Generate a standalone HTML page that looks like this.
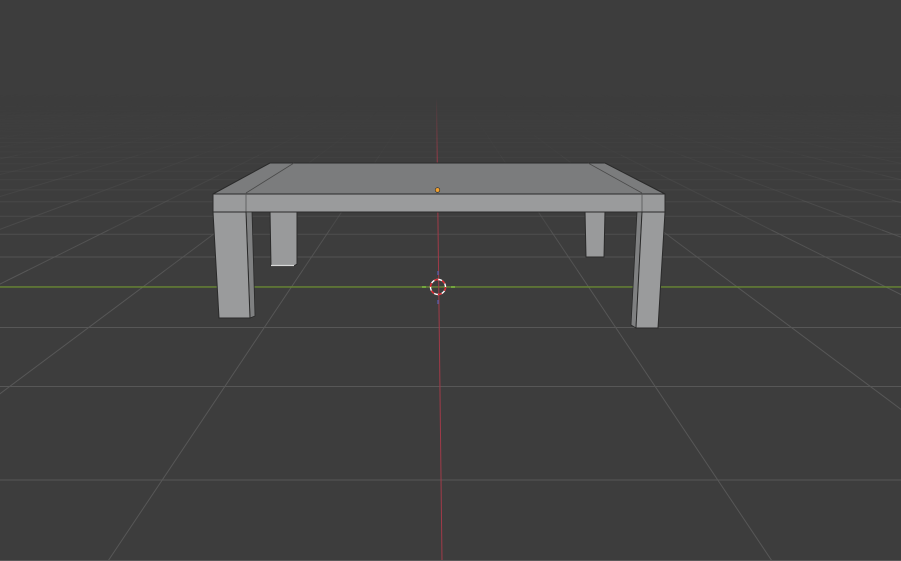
<!DOCTYPE html>
<html><head><meta charset="utf-8"><style>
html,body{margin:0;padding:0;background:#3d3d3d;width:901px;height:561px;overflow:hidden}
svg{display:block}
</style></head><body>
<svg id="s" width="901" height="561" viewBox="0 0 901 561" xmlns="http://www.w3.org/2000/svg">
<defs><linearGradient id="rg" x1="0" y1="0" x2="0" y2="1"><stop offset="0" stop-color="#a03a48" stop-opacity="0"/><stop offset="0.15" stop-color="#a03a48" stop-opacity="1"/><stop offset="1" stop-color="#a03a48"/></linearGradient></defs>
<rect width="901" height="561" fill="#3d3d3d"/>
<g id="grid"></g>
<line x1="0" y1="287" x2="901" y2="287" stroke="#6a8b2e" stroke-width="1.3"/>
<polygon points="436,98 437,98 442.5,561 441.5,561" fill="url(#rg)"/>
<line x1="0" y1="560.5" x2="901" y2="560.5" stroke="#5a5a5a" stroke-width="1"/>
<polygon points="270,211 297,211 297,264 294,266 271,266" fill="#999a9b" stroke="#2a2a2a" stroke-width="1"/>
<line x1="271" y1="265.5" x2="294" y2="265.5" stroke="#d8d8d8" stroke-width="1.2"/>
<polygon points="585,211 605,211 604,257 586,257" fill="#999a9b" stroke="#2a2a2a" stroke-width="1"/>
<polygon points="270,163 605,163 665,194 213,194" fill="#7b7c7d" stroke="#2a2a2a" stroke-width="1"/>
<line x1="246" y1="193" x2="294" y2="163" stroke="#4a4a4a" stroke-width="0.8"/>
<line x1="642" y1="193" x2="588" y2="163" stroke="#4a4a4a" stroke-width="0.8"/>
<rect x="213" y="194" width="452" height="18" fill="#9a9b9c" stroke="#2a2a2a" stroke-width="1"/>
<line x1="246" y1="194" x2="246" y2="212" stroke="#555" stroke-width="0.8"/>
<line x1="642" y1="194" x2="642" y2="212" stroke="#555" stroke-width="0.8"/>
<polygon points="246,212 252,212 255,316 250,318" fill="#7f8081" stroke="#2a2a2a" stroke-width="0.8"/>
<polygon points="213,212 246,212 250,318 219,318" fill="#9a9b9c" stroke="#2a2a2a" stroke-width="1"/>
<polygon points="637,212 642,212 636,328 631,325" fill="#7f8081" stroke="#2a2a2a" stroke-width="0.8"/>
<polygon points="642,212 665,212 658,328 636,328" fill="#9a9b9c" stroke="#2a2a2a" stroke-width="1"/>
<circle cx="437.5" cy="190" r="2.3" fill="#f0a030" stroke="#222" stroke-width="0.6"/>
<circle cx="438" cy="287" r="7.5" fill="none" stroke="#ffffff" stroke-width="1.4"/>
<circle cx="438" cy="287" r="7.5" fill="none" stroke="#d8232a" stroke-width="1.5" stroke-dasharray="4 3.85"/>
<line x1="438" y1="271" x2="438" y2="275" stroke="#5060b0" stroke-width="1.3"/>
<line x1="438" y1="300" x2="438" y2="304" stroke="#5060b0" stroke-width="1.3"/>
<line x1="422" y1="287" x2="426" y2="287" stroke="#80c040" stroke-width="1.5"/>
<line x1="451" y1="287" x2="455" y2="287" stroke="#80c040" stroke-width="1.5"/>
</svg>
<script>
(function(){
var g=document.getElementById('grid'),h='';
function op(y){var a=(y-95)/170;if(a<0)a=0;if(a>1)a=1;return a*a*0.85+0.15*a;}
for(var k=-1;k<200;k++){var y=65+1/(0.00241+0.0007*k);if(y>561||y<90)continue;
h+='<line x1="0" y1="'+y.toFixed(2)+'" x2="901" y2="'+y.toFixed(2)+'" stroke="#575757" stroke-opacity="'+op(y).toFixed(3)+'" stroke-width="1"/>';}
for(var k=-40;k<=40;k++){if(k==0)continue;var xb=440+k*332;
var ys=[95,115,135,155,175,200,230,270,561];
for(var i=0;i<ys.length-1;i++){var y1=ys[i],y2=ys[i+1];
var x1=440+(xb-440)*(y1-65)/496,x2=440+(xb-440)*(y2-65)/496;
if(Math.max(x1,x2)<-50||Math.min(x1,x2)>951)continue;
h+='<line x1="'+x1.toFixed(1)+'" y1="'+y1+'" x2="'+x2.toFixed(1)+'" y2="'+y2+'" stroke="#575757" stroke-opacity="'+op((y1+y2)/2).toFixed(3)+'" stroke-width="1"/>';}}
g.innerHTML=h;
})();
</script>
</body></html>
